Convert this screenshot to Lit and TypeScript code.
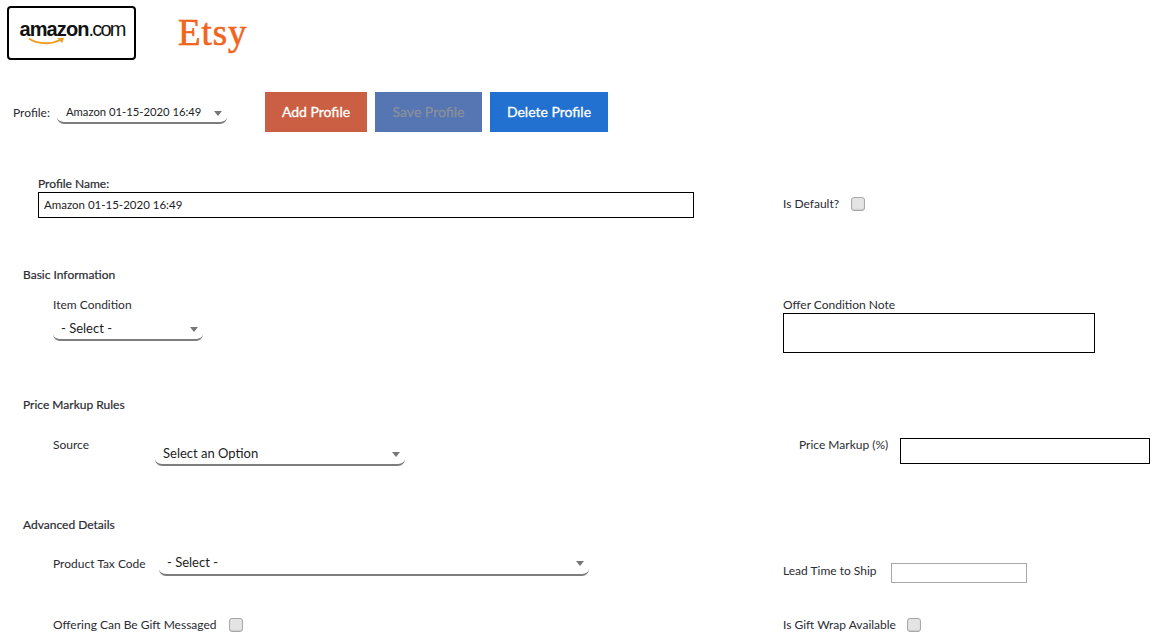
import { LitElement, html, css } from "lit";
import { customElement } from "lit/decorators.js";

@customElement("app-root")
export class AppRoot extends LitElement {
  static styles = css`
    :host { display: block; width: 1160px; height: 643px; overflow: hidden; background: #fff; color: #2b2b33; font: 12px/14px Lato, "Open Sans", sans-serif; }
    .logos { display: flex; height: 86px; padding: 6px 0 0 7px; box-sizing: content-box; align-items: flex-start; }
    .amazon { box-sizing: border-box; width: 129px; height: 54px; border: 2px solid #000; border-radius: 4px; display: flex; align-items: center; justify-content: center; }
    .amazon-mark { display: flex; flex-direction: column; width: 105px; height: 30px; margin-left: 1px; color: #111; font: 700 20px/22px "Liberation Sans", sans-serif; letter-spacing: -0.9px; }
    .amazon-mark span { font-weight: 400; letter-spacing: -1.8px; }
    .amazon-mark svg { margin: -3px 0 0 8px; display: block; }
    .etsy { margin: 4px 0 0 42px; color: #f1641e; font: 400 37px/46px "Liberation Serif", serif; letter-spacing: 0.9px; -webkit-text-stroke: 0.6px #f1641e; }
    .toolbar { display: flex; height: 40px; padding-left: 13px; align-items: center; }
    .toolbar .lbl { margin-right: 8px; padding-top: 2px; width: 36px; }
    .btn { height: 40px; display: flex; align-items: center; justify-content: center; color: #fff; font-size: 14px; -webkit-text-stroke: 0.3px currentColor; }
    .add { width: 102px; background: #cb5f43; margin: 0 8px 0 38px; }
    .save { width: 107px; background: #5576b2; color: #8b8f9b; margin-right: 8px; }
    .del { width: 118px; background: #2270cf; }
    .select { box-sizing: border-box; display: flex; justify-content: space-between; align-items: center; border-bottom: 2px solid #7d7d7d; border-radius: 0 0 7px 7px; color: #1c1c24; }
    .select i { width: 0; height: 0; border: 4.5px solid transparent; border-top: 5px solid #777; border-bottom: 0; margin-top: 3px; }
    .s-profile { width: 170px; height: 26px; padding: 3px 5px 0 9px; font-size: 11.25px; align-self: flex-start; margin-top: 6px; }
    .s-item { width: 150px; height: 23px; padding: 0 5px 2px 8px; font-size: 13px; margin-top: 6px; }
    .s-source { width: 250px; height: 24px; padding: 0 5px 0 8px; font-size: 13px; margin-top: 4px; }
    .s-tax { width: 430px; height: 24px; padding: 0 5px 3px 8px; font-size: 13px; }
    .row { display: grid; grid-template-columns: 783px 1fr; }
    .cell { display: flex; }
    .ind { padding-left: 53px; }
    .name { margin-top: 46px; height: 40px; }
    .name-left { padding-left: 38px; display: flex; flex-direction: column; }
    .name-label { height: 14px; line-height: 12px; -webkit-text-stroke: 0.2px currentColor; }
    .name-input { box-sizing: border-box; width: 656px; height: 26px; border: 1px solid #000; padding: 0 5px; display: flex; align-items: center; font-size: 11.5px; color: #1c1c24; }
    .check-row { display: flex; align-items: center; }
    .cb { box-sizing: border-box; width: 14px; height: 14px; background: #e4e4e4; border: 1px solid #a8a8a8; border-radius: 3px; box-shadow: inset 0 -1px 1px #ccc; }
    .default { padding-top: 12px; height: 26px; align-self: start; margin-top: 1px; box-sizing: content-box; }
    .default span { width: 68px; }
    .h { padding-left: 23px; height: 14px; -webkit-text-stroke: 0.2px currentColor; }
    .h1 { margin-top: 50px; }
    .basic { margin-top: 16px; height: 50px; }
    .col { display: flex; flex-direction: column; }
    .lbl14 { height: 14px; }
    .lbl15 { height: 15px; }
    .note { box-sizing: border-box; width: 312px; height: 40px; border: 1px solid #000; }
    .h2 { margin-top: 50px; }
    .markup { margin-top: 26px; height: 28px; }
    .src-lbl { width: 102px; }
    .mk-lbl { box-sizing: border-box; width: 117px; padding-left: 16px; }
    .mk-input { box-sizing: border-box; width: 250px; height: 26px; border: 1px solid #000; }
    .h3 { margin-top: 52px; }
    .adv { margin-top: 20px; height: 32px; }
    .tax-lbl { width: 106px; padding-top: 5px; }
    .lead { display: flex; padding-top: 11px; }
    .lead span { width: 108px; padding-top: 1px; }
    .lead-input { box-sizing: border-box; width: 136px; height: 20px; border: 1px solid #a9a9a9; }
    .gift { margin-top: 34px; height: 14px; }
    .gift-l { width: 176px; }
    .gift-r { width: 124px; }
  `;

  render() {
    const sel = (cls: string, text: string) => html`<div class="select ${cls}"><span>${text}</span><i></i></div>`;
    return html`
      <div class="logos">
        <div class="amazon">
          <div class="amazon-mark">
            <div>amazon<span>.com</span></div>
            <svg width="40" height="10" viewBox="0 0 40 10"><path d="M1 1.5C9 7 22 8 32 3" fill="none" stroke="#f39a1d" stroke-width="1.8"/><path d="M29 1.2L36 0.8L34 6.5C33.5 4.5 31.5 2.8 29 1.2Z" fill="#f39a1d"/></svg>
          </div>
        </div>
        <div class="etsy">Etsy</div>
      </div>
      <div class="toolbar">
        <span class="lbl">Profile:</span>
        ${sel("s-profile", "Amazon 01-15-2020 16:49")}
        <div class="btn add">Add Profile</div>
        <div class="btn save">Save Profile</div>
        <div class="btn del">Delete Profile</div>
      </div>
      <div class="row name">
        <div class="name-left">
          <div class="name-label">Profile Name:</div>
          <div class="name-input">Amazon 01-15-2020 16:49</div>
        </div>
        <div class="check-row default">
          <span>Is Default?</span><div class="cb"></div>
        </div>
      </div>
      <div class="h h1">Basic Information</div>
      <div class="row basic">
        <div class="ind col">
          <div class="lbl14">Item Condition</div>
          ${sel("s-item", "- Select -")}
        </div>
        <div class="col">
          <div class="lbl15">Offer Condition Note</div>
          <div class="note"></div>
        </div>
      </div>
      <div class="h h2">Price Markup Rules</div>
      <div class="row markup">
        <div class="ind cell">
          <div class="src-lbl">Source</div>
          ${sel("s-source", "Select an Option")}
        </div>
        <div class="cell">
          <div class="mk-lbl">Price Markup (%)</div>
          <div class="mk-input"></div>
        </div>
      </div>
      <div class="h h3">Advanced Details</div>
      <div class="row adv">
        <div class="ind cell">
          <div class="tax-lbl">Product Tax Code</div>
          ${sel("s-tax", "- Select -")}
        </div>
        <div class="lead"><span>Lead Time to Ship</span><div class="lead-input"></div></div>
      </div>
      <div class="row gift">
        <div class="ind check-row"><span class="gift-l">Offering Can Be Gift Messaged</span><div class="cb"></div></div>
        <div class="check-row"><span class="gift-r">Is Gift Wrap Available</span><div class="cb"></div></div>
      </div>
    `;
  }
}
